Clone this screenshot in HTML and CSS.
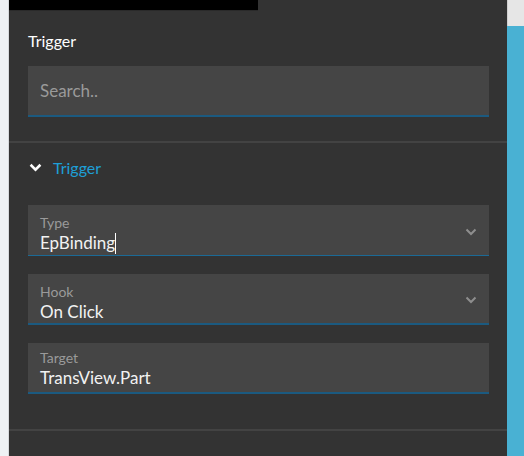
FILE: index.html
```html
<!DOCTYPE html>
<html>
<head>
<meta charset="utf-8">
<link rel="stylesheet" href="styles.css">
</head>
<body>
<div class="app">
  <div class="left-strip"></div>
  <div class="panel">
    <div class="topbar"></div>
    <div class="heading">Trigger</div>
    <div class="search">Search..</div>
    <div class="divider"></div>
    <div class="section-head">
      <svg class="chev-white" width="13" height="9" viewBox="0 0 13 9"><path d="M1.6 1.8 L6.5 6.6 L11.4 1.8" fill="none" stroke="#ffffff" stroke-width="2.6"/></svg>
      <span class="section-title">Trigger</span>
    </div>
    <div class="fields">
      <div class="field field-thin">
        <div class="field-text">
          <div class="label">Type</div>
          <div class="value">EpBinding<span class="caret"></span></div>
        </div>
        <svg class="chev" width="12" height="8" viewBox="0 0 12 8"><path d="M1.5 1.5 L6 6 L10.5 1.5" fill="none" stroke="#8e8e8e" stroke-width="2"/></svg>
      </div>
      <div class="field">
        <div class="field-text">
          <div class="label">Hook</div>
          <div class="value">On Click</div>
        </div>
        <svg class="chev" width="12" height="8" viewBox="0 0 12 8"><path d="M1.5 1.5 L6 6 L10.5 1.5" fill="none" stroke="#8e8e8e" stroke-width="2"/></svg>
      </div>
      <div class="field field-plain">
        <div class="field-text">
          <div class="label">Target</div>
          <div class="value">TransView.Part</div>
        </div>
      </div>
    </div>
    <div class="divider divider-bottom"></div>
  </div>
  <div class="right-strip">
    <div class="right-top"></div>
    <div class="right-blue"></div>
  </div>
</div>
</body>
</html>
```

FILE: styles.css
```css
html, body {
  margin: 0;
  padding: 0;
  height: 100%;
}
body {
  background: #eef1f4;
  font-family: "Lato", "Open Sans", sans-serif;
  overflow: hidden;
}
.app {
  display: flex;
  height: 456px;
}
.left-strip {
  width: 8px;
  background: #eef1f4;
  border-right: 1px solid #d6d9dc;
}
.panel {
  width: 498px;
  background: #333333;
  display: flex;
  flex-direction: column;
}
.topbar {
  width: 249px;
  height: 11px;
  background: #000000;
  border-bottom: 1px solid #2a2a2a;
  box-sizing: border-box;
}
.heading {
  margin: 20px 0 0 19px;
  color: #ffffff;
  font-size: 16px;
  line-height: 20px;
  height: 20px;
}
.search {
  margin: 15px 18px 0 19px;
  height: 51px;
  box-sizing: border-box;
  background: #454545;
  border-bottom: 2px solid #1b5a80;
  color: #9a9a9a;
  font-size: 17px;
  display: flex;
  align-items: center;
  padding-left: 12px;
  padding-bottom: 1px;
}
.divider {
  margin-top: 24px;
  height: 2px;
  background: #434343;
}
.section-head {
  margin: 15px 0 0 20px;
  height: 20px;
  display: flex;
  align-items: center;
  gap: 11px;
}
.chev-white {
  display: block;
  margin-top: -1px;
}
.section-title {
  color: #1e9fd6;
  font-size: 16px;
  line-height: 20px;
}
.fields {
  margin: 27px 18px 0 19px;
  display: flex;
  flex-direction: column;
  gap: 18px;
}
.field {
  height: 51px;
  box-sizing: border-box;
  background: #454545;
  border-bottom: 2px solid #1b5a80;
  display: flex;
  align-items: center;
  padding: 0 12px;
}
.field-thin {
  border-bottom: 1px solid #1b6a96;
}
.field-text {
  flex: 1;
  align-self: flex-start;
  padding-top: 8px;
}
.field-plain .field-text {
  padding-top: 5px;
}
.label {
  color: #9a9a9a;
  font-size: 14px;
  line-height: 19px;
}
.value {
  color: #f2f2f2;
  font-size: 17px;
  line-height: 22px;
  display: flex;
  align-items: center;
}
.caret {
  display: inline-block;
  width: 1px;
  height: 21px;
  background: #ffffff;
}
.chev {
  display: block;
  margin-top: 3px;
}
.divider-bottom {
  margin-top: 35px;
}
.right-strip {
  width: 17px;
  display: flex;
  flex-direction: column;
}
.right-top {
  height: 26px;
  background: #e6e6e6;
  border-left: 1px solid #d0d0d0;
}
.right-blue {
  flex: 1;
  background: #49b1d3;
}
```
